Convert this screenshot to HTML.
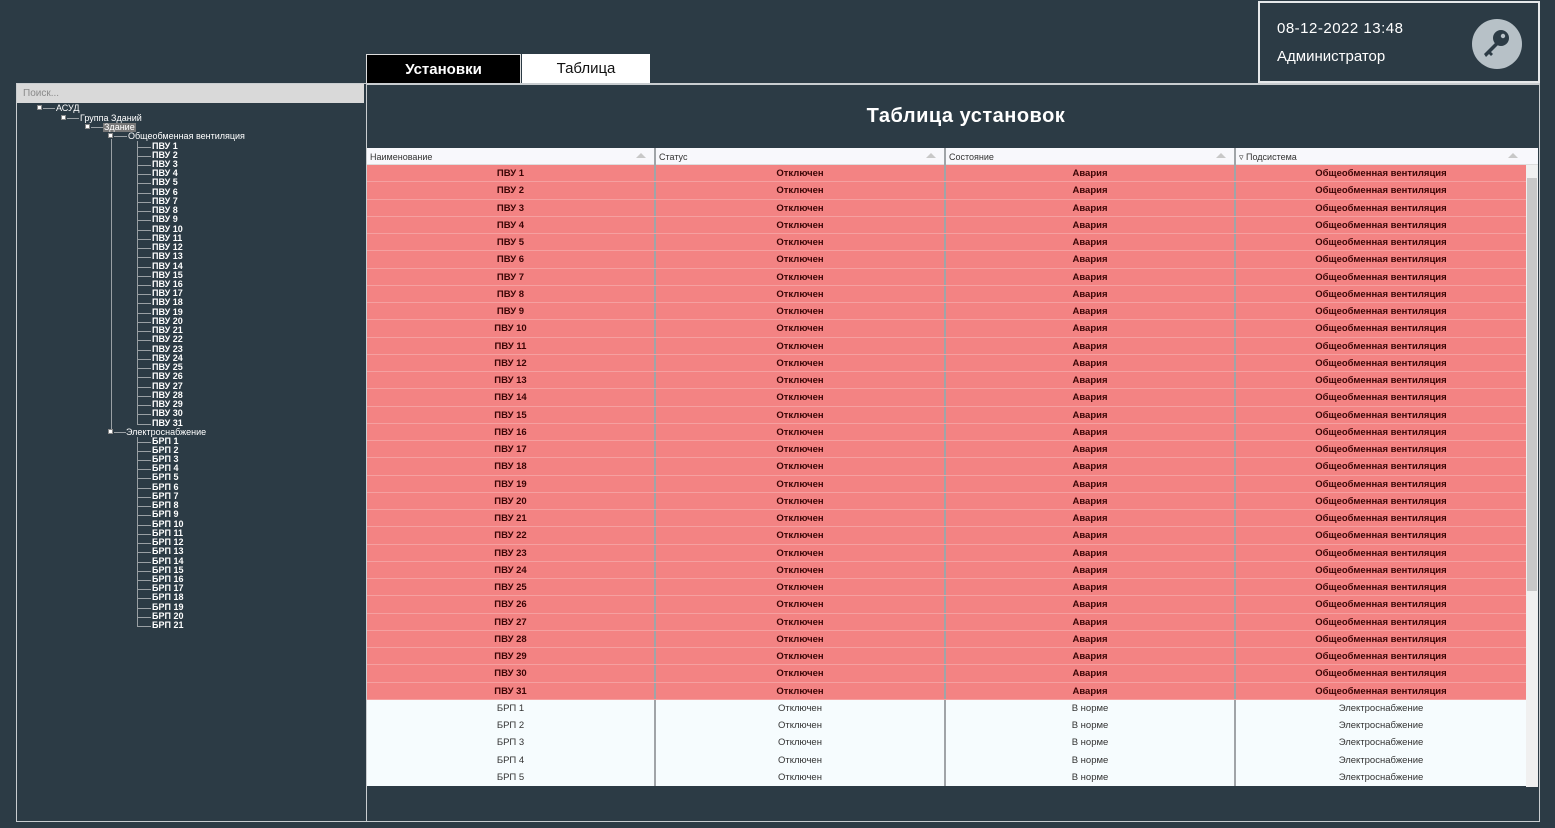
<!DOCTYPE html>
<html><head><meta charset="utf-8"><style>
*{margin:0;padding:0;box-sizing:border-box}
body{width:1555px;height:828px;background:#2c3b45;position:relative;overflow:hidden;font-family:"Liberation Sans","DejaVu Sans",sans-serif}
.abs{position:absolute}
#left{left:16px;top:83px;width:350px;height:739px;border:1px solid #c9cdd0;border-right:none}
#search{left:17px;top:84px;width:347px;height:19px;background:#d9d9d9;color:#8a8a8a;font-size:10px;padding:4px 0 0 6px}
.t{position:absolute;color:#fff;font-size:9px;line-height:9px;white-space:nowrap}
.hl{position:absolute;height:1px;background:#9aa0a4}
.vl{position:absolute;width:1px;background:#9aa0a4}
.box{position:absolute;width:5px;height:5px;background:#fff;border:1px solid #888}
.lst{line-height:9.23px;font-size:9px;color:#fff;font-weight:bold;white-space:nowrap}
.lst div{padding-left:15px;background:linear-gradient(#9aa0a4,#9aa0a4) no-repeat 0 5px/14px 1px}
#tab1{left:366px;top:54px;width:155px;height:30px;background:#000;border:1px solid #ddd;color:#fff;font-size:15px;font-weight:bold;text-align:center;line-height:29px}
#tab2{left:522px;top:54px;width:128px;height:29px;background:#fff;color:#111;font-size:15px;text-align:center;line-height:30px}
#main{left:366px;top:83px;width:1174px;height:739px;border:1px solid #c9cdd0;border-top:2px solid #c9cdd0}
#title{left:366px;top:105px;width:1200px;text-align:center;color:#fff;font-size:20px;font-weight:bold;letter-spacing:.5px}
#info{left:1258px;top:1px;width:282px;height:82px;border:2px solid #e6e8ea;color:#fff}
#hdr{left:367px;top:148px;width:1171px;height:17px;background:#f8f8fc;border-bottom:1px solid #ddd}
.hc{position:absolute;top:0;height:17px;font-size:9px;color:#333;padding:4px 0 0 3px;border-right:2px solid #a0a4a8}
.ar{position:absolute;right:8px;top:5px;width:0;height:0;border-left:5px solid transparent;border-right:5px solid transparent;border-bottom:5px solid #c8c8c8}
#rows{left:367px;top:165px;width:1159px}
.r{height:17.26px;display:flex;font-size:9.5px;line-height:17px;border-bottom:1px solid #f5a0a0}
.r div{text-align:center;border-right:2px solid #a0a4a8}
.r div:nth-child(1){width:289px}.r div:nth-child(2){width:290px}.r div:nth-child(3){width:290px}.r div:nth-child(4){width:290px;border-right:none}
.red{background:#f38383;color:#3a0505;font-weight:bold}
.w{background:#f6fcfe;color:#333;border-bottom:none}
#sb{left:1526px;top:165px;width:12px;height:622px;background:#f0f0f0}
#thumb{left:1527px;top:178px;width:10px;height:413px;background:#c8c8c8}
</style></head><body>
<div id="left" class="abs"></div>
<div id="search" class="abs">Поиск...</div>

<div class="box" style="left:37px;top:105px"></div><div class="hl" style="left:43px;top:108px;width:12px"></div><div class="t" style="left:56px;top:104px">АСУД</div>
<div class="box" style="left:61px;top:115px"></div><div class="hl" style="left:67px;top:118px;width:12px"></div><div class="t" style="left:80px;top:114px">Группа Зданий</div>
<div class="box" style="left:85px;top:124px"></div><div class="hl" style="left:91px;top:127px;width:12px"></div><div class="t" style="left:103px;top:123px;background:#777;padding:0 1px">Здание</div>
<div class="box" style="left:108px;top:133px"></div><div class="hl" style="left:114px;top:136px;width:13px"></div><div class="t" style="left:128px;top:132px">Общеобменная вентиляция</div>
<div class="vl" style="left:111px;top:139px;height:293px"></div>
<div class="vl" style="left:137px;top:141px;height:283px"></div>
<div class="box" style="left:108px;top:429px"></div><div class="hl" style="left:114px;top:432px;width:12px"></div><div class="t" style="left:126px;top:428px">Электроснабжение</div>
<div class="vl" style="left:137px;top:437px;height:190px"></div>

<div class="abs" style="left:137px;top:141.5px">
<div class="lst">
<div>ПВУ 1</div><div>ПВУ 2</div><div>ПВУ 3</div><div>ПВУ 4</div><div>ПВУ 5</div><div>ПВУ 6</div><div>ПВУ 7</div><div>ПВУ 8</div><div>ПВУ 9</div><div>ПВУ 10</div><div>ПВУ 11</div><div>ПВУ 12</div><div>ПВУ 13</div><div>ПВУ 14</div><div>ПВУ 15</div><div>ПВУ 16</div><div>ПВУ 17</div><div>ПВУ 18</div><div>ПВУ 19</div><div>ПВУ 20</div><div>ПВУ 21</div><div>ПВУ 22</div><div>ПВУ 23</div><div>ПВУ 24</div><div>ПВУ 25</div><div>ПВУ 26</div><div>ПВУ 27</div><div>ПВУ 28</div><div>ПВУ 29</div><div>ПВУ 30</div><div>ПВУ 31</div>
</div></div>
<div class="abs" style="left:137px;top:436.5px">
<div class="lst">
<div>БРП 1</div><div>БРП 2</div><div>БРП 3</div><div>БРП 4</div><div>БРП 5</div><div>БРП 6</div><div>БРП 7</div><div>БРП 8</div><div>БРП 9</div><div>БРП 10</div><div>БРП 11</div><div>БРП 12</div><div>БРП 13</div><div>БРП 14</div><div>БРП 15</div><div>БРП 16</div><div>БРП 17</div><div>БРП 18</div><div>БРП 19</div><div>БРП 20</div><div>БРП 21</div>
</div></div>

<div id="tab1" class="abs">Установки</div>
<div id="tab2" class="abs">Таблица</div>
<div id="main" class="abs"></div>
<div id="title" class="abs">Таблица установок</div>
<div id="info" class="abs">
<div style="position:absolute;left:17px;top:17px;font-size:15px;letter-spacing:.5px">08-12-2022 13:48</div>
<div style="position:absolute;left:17px;top:45px;font-size:15px">Администратор</div>
<div style="position:absolute;left:212px;top:16px;width:50px;height:50px;border-radius:50%;background:#b7c1c7">
<svg width="50" height="50" viewBox="0 0 50 50"><circle cx="29" cy="19" r="8" fill="#2c3b45"/><circle cx="31" cy="17" r="2.2" fill="#b7c1c7"/><path d="M24 23 L12 35 L14 38 L17 35 L19 37 L21 35 L19 33 L27 25 Z" fill="#2c3b45"/></svg></div>
</div>

<div id="hdr" class="abs">
<div class="hc" style="left:0;width:289px">Наименование<span class="ar"></span></div>
<div class="hc" style="left:289px;width:290px">Статус<span class="ar"></span></div>
<div class="hc" style="left:579px;width:290px">Состояние<span class="ar"></span></div>
<div class="hc" style="left:869px;width:302px;border-right:none">▿ Подсистема<span class="ar" style="right:20px"></span></div>
</div>
<div id="sb" class="abs"></div><div id="thumb" class="abs"></div>

<div id="rows" class="abs">
<div class="r red"><div>ПВУ 1</div><div>Отключен</div><div>Авария</div><div>Общеобменная вентиляция</div></div>
<div class="r red"><div>ПВУ 2</div><div>Отключен</div><div>Авария</div><div>Общеобменная вентиляция</div></div>
<div class="r red"><div>ПВУ 3</div><div>Отключен</div><div>Авария</div><div>Общеобменная вентиляция</div></div>
<div class="r red"><div>ПВУ 4</div><div>Отключен</div><div>Авария</div><div>Общеобменная вентиляция</div></div>
<div class="r red"><div>ПВУ 5</div><div>Отключен</div><div>Авария</div><div>Общеобменная вентиляция</div></div>
<div class="r red"><div>ПВУ 6</div><div>Отключен</div><div>Авария</div><div>Общеобменная вентиляция</div></div>
<div class="r red"><div>ПВУ 7</div><div>Отключен</div><div>Авария</div><div>Общеобменная вентиляция</div></div>
<div class="r red"><div>ПВУ 8</div><div>Отключен</div><div>Авария</div><div>Общеобменная вентиляция</div></div>
<div class="r red"><div>ПВУ 9</div><div>Отключен</div><div>Авария</div><div>Общеобменная вентиляция</div></div>
<div class="r red"><div>ПВУ 10</div><div>Отключен</div><div>Авария</div><div>Общеобменная вентиляция</div></div>
<div class="r red"><div>ПВУ 11</div><div>Отключен</div><div>Авария</div><div>Общеобменная вентиляция</div></div>
<div class="r red"><div>ПВУ 12</div><div>Отключен</div><div>Авария</div><div>Общеобменная вентиляция</div></div>
<div class="r red"><div>ПВУ 13</div><div>Отключен</div><div>Авария</div><div>Общеобменная вентиляция</div></div>
<div class="r red"><div>ПВУ 14</div><div>Отключен</div><div>Авария</div><div>Общеобменная вентиляция</div></div>
<div class="r red"><div>ПВУ 15</div><div>Отключен</div><div>Авария</div><div>Общеобменная вентиляция</div></div>
<div class="r red"><div>ПВУ 16</div><div>Отключен</div><div>Авария</div><div>Общеобменная вентиляция</div></div>
<div class="r red"><div>ПВУ 17</div><div>Отключен</div><div>Авария</div><div>Общеобменная вентиляция</div></div>
<div class="r red"><div>ПВУ 18</div><div>Отключен</div><div>Авария</div><div>Общеобменная вентиляция</div></div>
<div class="r red"><div>ПВУ 19</div><div>Отключен</div><div>Авария</div><div>Общеобменная вентиляция</div></div>
<div class="r red"><div>ПВУ 20</div><div>Отключен</div><div>Авария</div><div>Общеобменная вентиляция</div></div>
<div class="r red"><div>ПВУ 21</div><div>Отключен</div><div>Авария</div><div>Общеобменная вентиляция</div></div>
<div class="r red"><div>ПВУ 22</div><div>Отключен</div><div>Авария</div><div>Общеобменная вентиляция</div></div>
<div class="r red"><div>ПВУ 23</div><div>Отключен</div><div>Авария</div><div>Общеобменная вентиляция</div></div>
<div class="r red"><div>ПВУ 24</div><div>Отключен</div><div>Авария</div><div>Общеобменная вентиляция</div></div>
<div class="r red"><div>ПВУ 25</div><div>Отключен</div><div>Авария</div><div>Общеобменная вентиляция</div></div>
<div class="r red"><div>ПВУ 26</div><div>Отключен</div><div>Авария</div><div>Общеобменная вентиляция</div></div>
<div class="r red"><div>ПВУ 27</div><div>Отключен</div><div>Авария</div><div>Общеобменная вентиляция</div></div>
<div class="r red"><div>ПВУ 28</div><div>Отключен</div><div>Авария</div><div>Общеобменная вентиляция</div></div>
<div class="r red"><div>ПВУ 29</div><div>Отключен</div><div>Авария</div><div>Общеобменная вентиляция</div></div>
<div class="r red"><div>ПВУ 30</div><div>Отключен</div><div>Авария</div><div>Общеобменная вентиляция</div></div>
<div class="r red"><div>ПВУ 31</div><div>Отключен</div><div>Авария</div><div>Общеобменная вентиляция</div></div>
<div class="r w"><div>БРП 1</div><div>Отключен</div><div>В норме</div><div>Электроснабжение</div></div>
<div class="r w"><div>БРП 2</div><div>Отключен</div><div>В норме</div><div>Электроснабжение</div></div>
<div class="r w"><div>БРП 3</div><div>Отключен</div><div>В норме</div><div>Электроснабжение</div></div>
<div class="r w"><div>БРП 4</div><div>Отключен</div><div>В норме</div><div>Электроснабжение</div></div>
<div class="r w"><div>БРП 5</div><div>Отключен</div><div>В норме</div><div>Электроснабжение</div></div>
</div>
</body></html>
